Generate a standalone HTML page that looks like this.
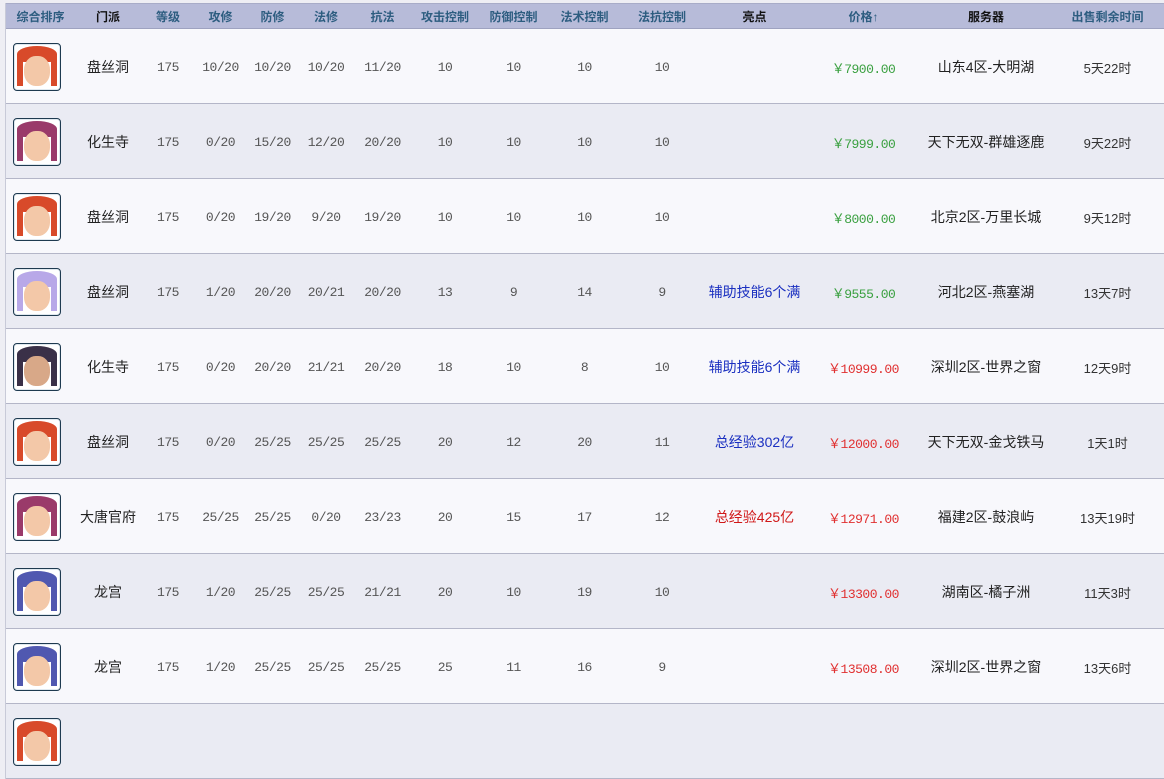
<!DOCTYPE html>
<html><head><meta charset="utf-8"><style>
body{margin:0;width:1164px;height:719px;overflow:hidden;background:#eeeef4;font-family:"Liberation Sans","Noto Sans CJK SC",sans-serif;}
.wrap{position:absolute;left:5px;top:3px;border-left:1px solid #c8cad8;}
table{border-collapse:collapse;table-layout:fixed;width:1159px;}
th{height:24px;background:#b7bbd9;color:#2d5d80;font-size:12px;font-weight:bold;padding:0;border-top:1px solid #a8acc8;border-bottom:1px solid #9ea2c0;}
th.k{color:#111}
td{height:72px;padding:2px 0 0 0;text-align:center;font-size:13px;color:#555;border-bottom:1px solid #b4b6c8;font-family:"Liberation Mono","Noto Sans CJK SC",monospace;letter-spacing:-0.5px;}
tr.a td{background:#f8f8fc}
tr.b td{background:#eaebf3}
td.m,td.s,td.t,td.bl,td.rd{font-family:"Liberation Sans","Noto Sans CJK SC",sans-serif;letter-spacing:0}
td.m{color:#222;font-size:14px}
td.s{color:#222;font-size:14px}
td.t{color:#333;font-size:13px}
.g{color:#3aa040}.r{color:#e03030}.bl{color:#1a2fc0;font-size:14px}.rd{color:#d01818;font-size:14px}
.av{width:46px;height:46px;margin:0 0 0 7px;border:1px solid #1e3a50;border-radius:4px;position:relative;overflow:hidden;background:#fff;box-shadow:inset 0 0 0 1px #dfe8ef}
.av i{position:absolute;left:10px;top:12px;width:26px;height:30px;border-radius:45%;background:#f3c8a8}
.av b{position:absolute;left:3px;top:2px;width:40px;height:16px;border-radius:50% 50% 20% 20%}
.av u{position:absolute;left:3px;top:10px;width:6px;height:32px}
.av s{position:absolute;right:3px;top:10px;width:6px;height:32px}
.red b,.red u,.red s{background:#d84a2a}
.pur b,.pur u,.pur s{background:#9a3a6a}
.lav b,.lav u,.lav s{background:#b8a8e8}
.dk b,.dk u,.dk s{background:#3a3048}
.blu b,.blu u,.blu s{background:#5058b0}
.dk i{background:#d8a888}
</style></head><body>
<div class="wrap"><table>
<colgroup><col style="width:69px"><col style="width:66px"><col style="width:54px"><col style="width:51px"><col style="width:53px"><col style="width:54px"><col style="width:59px"><col style="width:66px"><col style="width:71px"><col style="width:71px"><col style="width:84px"><col style="width:101px"><col style="width:117px"><col style="width:128px"><col style="width:115px"></colgroup>
<tr><th>综合排序</th><th class="k">门派</th><th>等级</th><th>攻修</th><th>防修</th><th>法修</th><th>抗法</th><th>攻击控制</th><th>防御控制</th><th>法术控制</th><th>法抗控制</th><th class="k">亮点</th><th>价格↑</th><th class="k">服务器</th><th>出售剩余时间</th></tr>
<tr class="a"><td><div class="av red"><b></b><u></u><s></s><i></i></div></td><td class="m">盘丝洞</td><td>175</td><td>10/20</td><td>10/20</td><td>10/20</td><td>11/20</td><td>10</td><td>10</td><td>10</td><td>10</td><td></td><td class="g">￥7900.00</td><td class="s">山东4区-大明湖</td><td class="t">5天22时</td></tr>
<tr class="b"><td><div class="av pur"><b></b><u></u><s></s><i></i></div></td><td class="m">化生寺</td><td>175</td><td>0/20</td><td>15/20</td><td>12/20</td><td>20/20</td><td>10</td><td>10</td><td>10</td><td>10</td><td></td><td class="g">￥7999.00</td><td class="s">天下无双-群雄逐鹿</td><td class="t">9天22时</td></tr>
<tr class="a"><td><div class="av red"><b></b><u></u><s></s><i></i></div></td><td class="m">盘丝洞</td><td>175</td><td>0/20</td><td>19/20</td><td>9/20</td><td>19/20</td><td>10</td><td>10</td><td>10</td><td>10</td><td></td><td class="g">￥8000.00</td><td class="s">北京2区-万里长城</td><td class="t">9天12时</td></tr>
<tr class="b"><td><div class="av lav"><b></b><u></u><s></s><i></i></div></td><td class="m">盘丝洞</td><td>175</td><td>1/20</td><td>20/20</td><td>20/21</td><td>20/20</td><td>13</td><td>9</td><td>14</td><td>9</td><td class="bl">辅助技能6个满</td><td class="g">￥9555.00</td><td class="s">河北2区-燕塞湖</td><td class="t">13天7时</td></tr>
<tr class="a"><td><div class="av dk"><b></b><u></u><s></s><i></i></div></td><td class="m">化生寺</td><td>175</td><td>0/20</td><td>20/20</td><td>21/21</td><td>20/20</td><td>18</td><td>10</td><td>8</td><td>10</td><td class="bl">辅助技能6个满</td><td class="r">￥10999.00</td><td class="s">深圳2区-世界之窗</td><td class="t">12天9时</td></tr>
<tr class="b"><td><div class="av red"><b></b><u></u><s></s><i></i></div></td><td class="m">盘丝洞</td><td>175</td><td>0/20</td><td>25/25</td><td>25/25</td><td>25/25</td><td>20</td><td>12</td><td>20</td><td>11</td><td class="bl">总经验302亿</td><td class="r">￥12000.00</td><td class="s">天下无双-金戈铁马</td><td class="t">1天1时</td></tr>
<tr class="a"><td><div class="av pur"><b></b><u></u><s></s><i></i></div></td><td class="m">大唐官府</td><td>175</td><td>25/25</td><td>25/25</td><td>0/20</td><td>23/23</td><td>20</td><td>15</td><td>17</td><td>12</td><td class="rd">总经验425亿</td><td class="r">￥12971.00</td><td class="s">福建2区-鼓浪屿</td><td class="t">13天19时</td></tr>
<tr class="b"><td><div class="av blu"><b></b><u></u><s></s><i></i></div></td><td class="m">龙宫</td><td>175</td><td>1/20</td><td>25/25</td><td>25/25</td><td>21/21</td><td>20</td><td>10</td><td>19</td><td>10</td><td></td><td class="r">￥13300.00</td><td class="s">湖南区-橘子洲</td><td class="t">11天3时</td></tr>
<tr class="a"><td><div class="av blu"><b></b><u></u><s></s><i></i></div></td><td class="m">龙宫</td><td>175</td><td>1/20</td><td>25/25</td><td>25/25</td><td>25/25</td><td>25</td><td>11</td><td>16</td><td>9</td><td></td><td class="r">￥13508.00</td><td class="s">深圳2区-世界之窗</td><td class="t">13天6时</td></tr>
<tr class="b"><td style="vertical-align:top"><div class="av red" style="margin-top:12px"><b></b><u></u><s></s><i></i></div></td><td></td><td></td><td></td><td></td><td></td><td></td><td></td><td></td><td></td><td></td><td></td><td></td><td></td><td></td></tr>
</table></div>
</body></html>
